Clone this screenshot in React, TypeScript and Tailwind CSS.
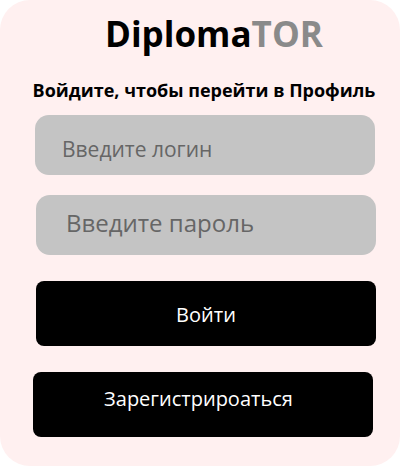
export default function App() {
  return (
    <div className="w-[400px] h-[466px] bg-white font-['Open_Sans',sans-serif]">
      <div className="w-full h-full rounded-[30px] bg-[#fff0f0] flex flex-col">
        <h1 className="mt-[12px] ml-[105px] text-[35px] leading-[44px] font-bold text-black">
          Diploma<span className="text-[#8a8a8a]">TOR</span>
        </h1>
        <p className="mt-[22px] text-center text-[18px] leading-[24px] font-bold text-black pl-[8px]">
          Войдите, чтобы перейти в Профиль
        </p>
        <input
          type="text"
          placeholder="Введите логин"
          className="mt-[13px] ml-[35px] w-[340px] h-[60px] rounded-[14px] bg-[#c4c4c4] pl-[27px] pt-[8px] text-[21px] text-black placeholder:text-[#666666] outline-none"
        />
        <input
          type="text"
          placeholder="Введите пароль"
          className="mt-[20px] ml-[36px] w-[340px] h-[60px] rounded-[14px] bg-[#c4c4c4] pl-[30px] pb-[5px] text-[24px] text-black placeholder:text-[#666666] outline-none"
        />
        <button className="mt-[26px] ml-[36px] w-[340px] h-[65px] rounded-[8px] bg-black text-white text-[20px] pt-[3px]">
          Войти
        </button>
        <button className="mt-[26px] ml-[33px] w-[340px] h-[65px] rounded-[8px] bg-black text-white text-[20px] pb-[12px] pr-[9px]">
          Зарегистрироаться
        </button>
      </div>
    </div>
  );
}
